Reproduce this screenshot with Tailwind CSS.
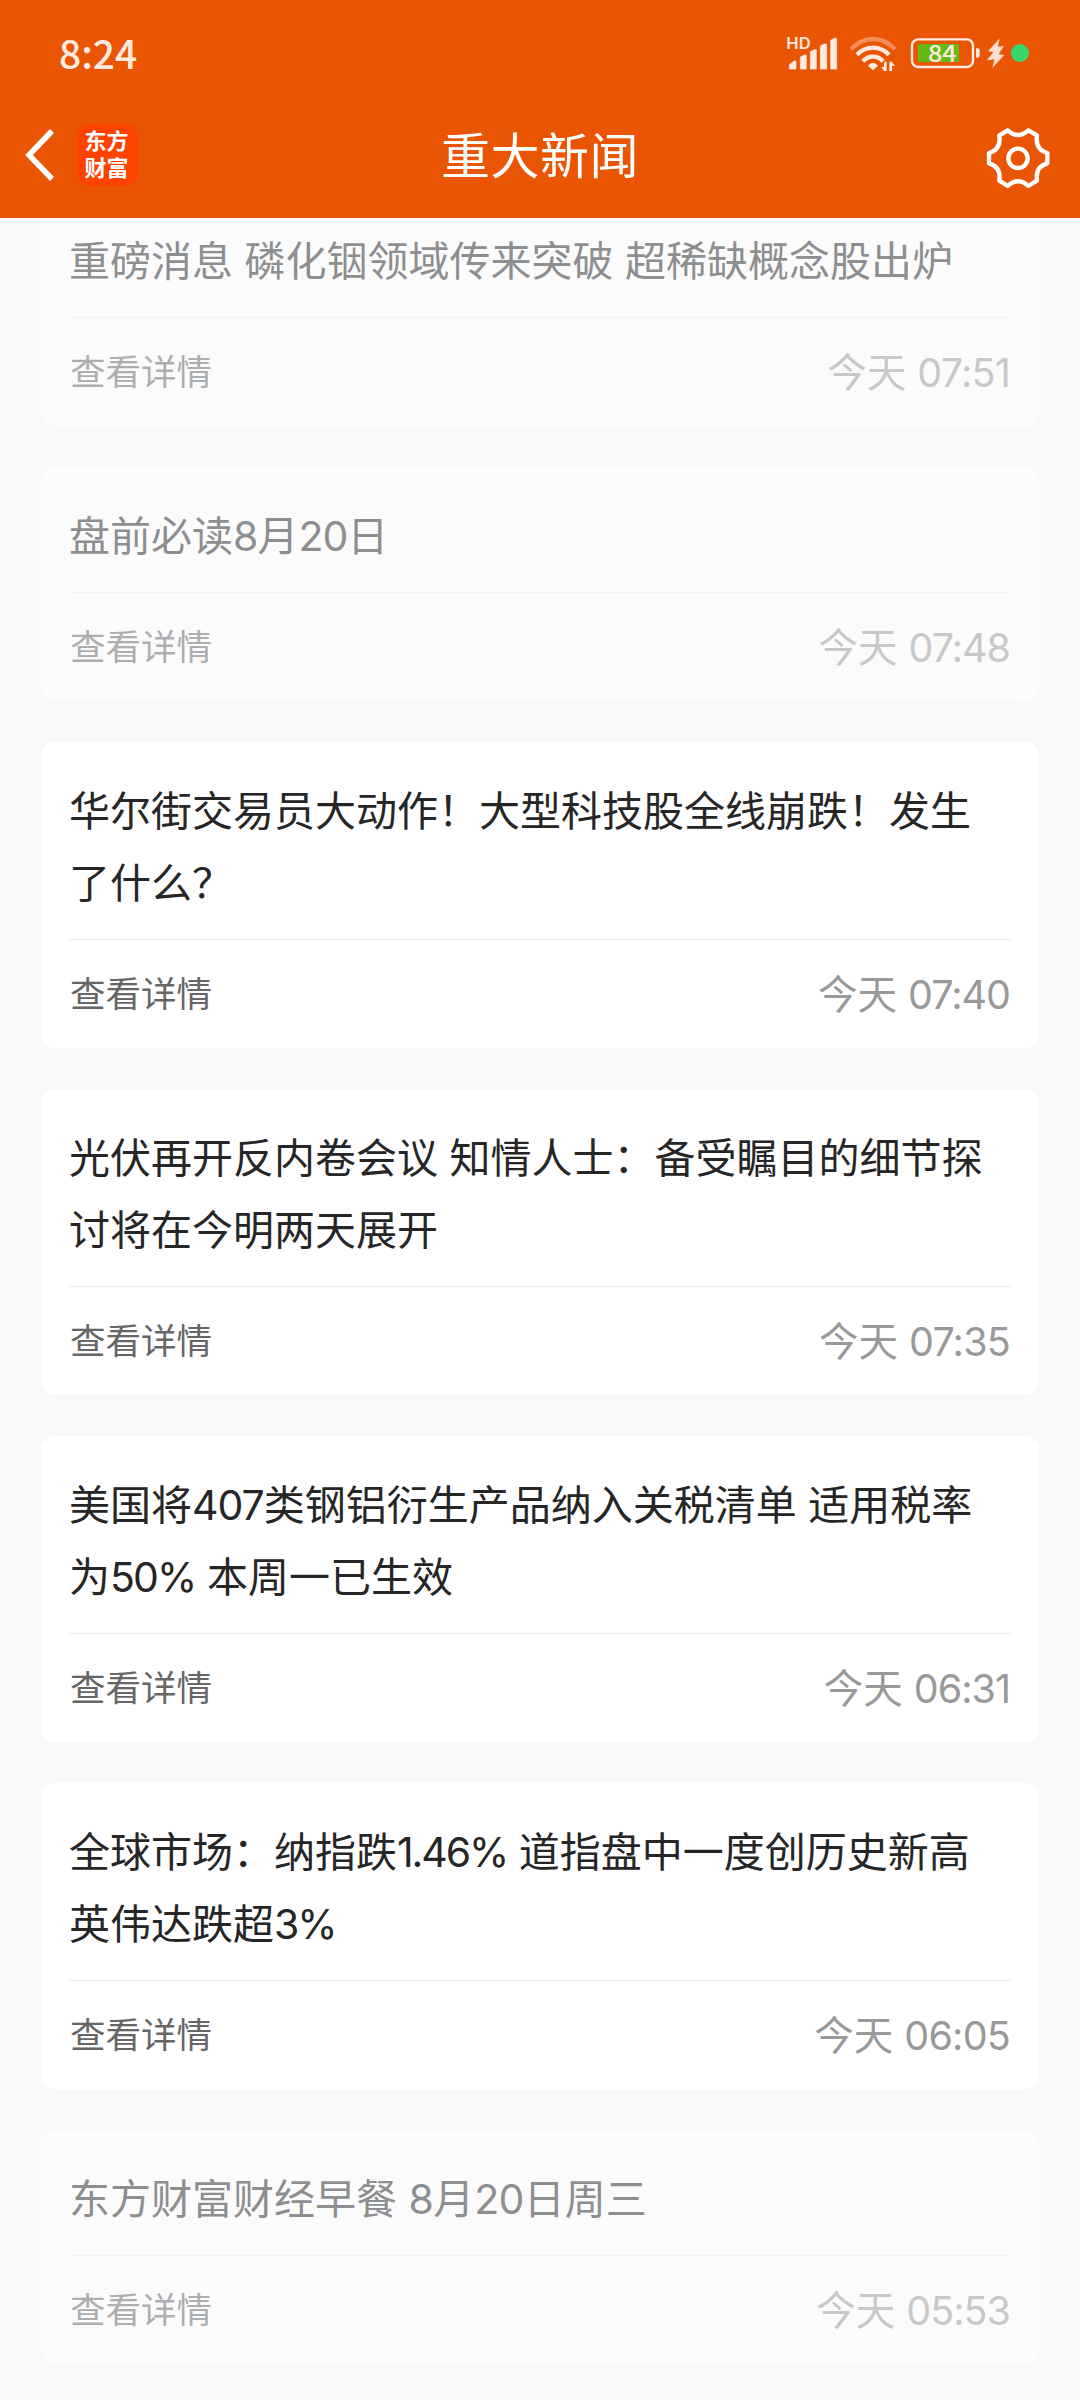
<!DOCTYPE html>
<html lang="zh-CN">
<head>
<meta charset="utf-8">
<title>重大新闻</title>
<script src="https://cdn.jsdelivr.net/npm/@tailwindcss/browser@4"></script>
</head>
<body class="h-[2400px] w-[1080px] overflow-hidden bg-[#f7f8fa] font-['Inter','Noto_Sans_CJK_SC',sans-serif]">
<div class="flex h-[2400px] flex-col overflow-hidden">
  <header class="z-10 flex h-[218px] shrink-0 flex-col bg-[#ea5504] text-white">
    <div class="flex h-[108px] items-center justify-between pl-[59px] pr-[50px]">
      <span class="pb-[3px] font-['Noto_Sans_CJK_SC',sans-serif] text-[39px] font-medium leading-none text-[#ffebdf]">8:24</span>
      <svg class="h-[40px] w-[244px]" viewBox="78 45 732 120" fill="#ffebdf">
        <text x="79" y="90" font-size="47" font-weight="600" textLength="73" lengthAdjust="spacingAndGlyphs">HD</text>
        <path d="M88 150V137L102 126H108V150ZM121 150V114L132 108H139V150ZM151 150V98L162 92H169V150ZM181 150V81L192 75H200V150ZM212 150V64L223 58H230V150Z" stroke="#ffebdf" stroke-width="2" stroke-linejoin="round"/>
        <g fill="none" stroke="#ffebdf" stroke-width="13">
          <path d="M273 91Q302 60 339 60T405 91" stroke-opacity=".38"/>
          <path d="M291 107Q312 86 339 86T387 107"/>
          <path d="M309 127Q321 113 339 113T369 127"/>
        </g>
        <path d="M324 140Q339 123 354 140L339 154Z"/>
        <path d="M380 128V156H373L363 144H372V128ZM388 156V128H395L405 140H396V156Z"/>
        <rect x="456" y="61" width="183" height="83" rx="19" fill="none" stroke="#ffebdf" stroke-width="7"/>
        <path d="M648 88H653Q659 88 659 94V109Q659 116 653 116H648Z"/>
        <rect x="474" y="75" width="123" height="54" rx="4" fill="#66b814"/>
        <text x="504" y="128" font-size="68" font-weight="500" textLength="86" lengthAdjust="spacingAndGlyphs" class="font-['Noto_Sans_CJK_SC',sans-serif]">84</text>
        <path d="M719 58L684 97L700 99L681 124L703 121L697 147L733 108L716 106L732 81L714 83Z" fill="#ffddcf"/>
        <circle cx="780" cy="102" r="27" fill="#38d66b"/>
      </svg>
    </div>
    <div class="grid h-[94px] grid-cols-3 items-center">
      <div class="flex items-center pl-[24px]">
        <svg class="h-[54px] w-[32px]" viewBox="0 0 32 54" fill="none" stroke="#fff" stroke-width="5.5"><path d="M28 3L5 27L28 51"/></svg>
        <div class="ml-[21px] flex h-[62px] w-[61px] flex-col items-center justify-center rounded-[14px] bg-[#ff4200] pb-[5px] pr-[2px] font-['Noto_Sans_CJK_SC',sans-serif] text-[22px] font-bold leading-[27px]"><span>东方</span><span>财富</span></div>
      </div>
      <h1 class="pt-[2px] text-center text-[49px] leading-none tracking-[0.5px]">重大新闻</h1>
      <div class="flex justify-end pr-[30px] pt-[5px]">
        <svg class="h-[64px] w-[64px]" viewBox="678 316 192 192" fill="none" stroke="#fff" stroke-width="13" stroke-linejoin="round">
          <path d="M743 329Q774 357 805 329L831 344Q825 387 862 397V428Q825 438 831 480L805 496Q774 468 743 496L718 480Q724 438 687 428V397Q724 387 718 344Z"/>
          <circle cx="774" cy="413" r="29"/>
        </svg>
      </div>
    </div>
  </header>

  <main class="-mt-[26px] flex flex-col gap-[41px] px-[41px] text-[41px] leading-[72px] text-[#262626]">
    <article class="rounded-[14px] bg-white px-7 pt-[33px] opacity-50">
      <h2 class="h-[92px] whitespace-nowrap">重磅消息 磷化铟领域传来突破 超稀缺概念股出炉</h2>
      <div class="flex h-[109px] items-center justify-between border-t border-[#ebebeb] pl-[1px] pr-[1px] pt-[2px]"><span class="text-[35.5px] text-[#666]">查看详情</span><time class="text-[39.5px] text-[#999]">今天 <span class="tracking-[-0.8px]">07:51</span></time></div>
    </article>
    <article class="rounded-[14px] bg-white px-7 pt-[33px] opacity-50">
      <h2 class="h-[92px] whitespace-nowrap">盘前必读<span class="tracking-[-1px]">8</span>月<span class="tracking-[-1px]">20</span>日</h2>
      <div class="flex h-[109px] items-center justify-between border-t border-[#ebebeb] pl-[1px] pr-[1px] pt-[2px]"><span class="text-[35.5px] text-[#666]">查看详情</span><time class="text-[39.5px] text-[#999]">今天 <span class="tracking-[-1px]">07:48</span></time></div>
    </article>
    <article class="rounded-[14px] bg-white px-7 pt-[33px]">
      <h2 class="h-[164px] whitespace-nowrap">华尔街交易员大动作！大型科技股全线崩跌！发生<br>了什么？</h2>
      <div class="flex h-[109px] items-center justify-between border-t border-[#ebebeb] pl-[1px] pr-[1px] pt-[2px]"><span class="text-[35.5px] text-[#666]">查看详情</span><time class="text-[39.5px] text-[#999]">今天 <span class="tracking-[-1px]">07:40</span></time></div>
    </article>
    <article class="rounded-[14px] bg-white px-7 pt-[33px]">
      <h2 class="h-[164px] whitespace-nowrap">光伏再开反内卷会议 知情人士：备受瞩目的细节探<br>讨将在今明两天展开</h2>
      <div class="flex h-[109px] items-center justify-between border-t border-[#ebebeb] pl-[1px] pr-[1px] pt-[2px]"><span class="text-[35.5px] text-[#666]">查看详情</span><time class="text-[39.5px] text-[#999]">今天 <span class="tracking-[-0.8px]">07:35</span></time></div>
    </article>
    <article class="rounded-[14px] bg-white px-7 pt-[33px]">
      <h2 class="h-[164px] whitespace-nowrap">美国将<span class="tracking-[-1px]">407</span>类钢铝衍生产品纳入关税清单 适用税率<br>为<span class="tracking-[-1.9px]">50%</span> 本周一已生效</h2>
      <div class="flex h-[109px] items-center justify-between border-t border-[#ebebeb] pl-[1px] pr-[1px] pt-[2px]"><span class="text-[35.5px] text-[#666]">查看详情</span><time class="text-[39.5px] text-[#999]">今天 <span class="tracking-[-1px]">06:31</span></time></div>
    </article>
    <article class="rounded-[14px] bg-white px-7 pt-[33px]">
      <h2 class="h-[164px] whitespace-nowrap">全球市场：纳指跌<span class="tracking-[-2.1px]">1.46%</span> 道指盘中一度创历史新高<br>英伟达跌超<span class="tracking-[-2px]">3%</span></h2>
      <div class="flex h-[109px] items-center justify-between border-t border-[#ebebeb] pl-[1px] pr-[1px] pt-[2px]"><span class="text-[35.5px] text-[#666]">查看详情</span><time class="text-[39.5px] text-[#999]">今天 <span class="tracking-[-0.8px]">06:05</span></time></div>
    </article>
    <article class="rounded-[14px] bg-white px-7 pt-[33px] opacity-50">
      <h2 class="h-[92px] whitespace-nowrap">东方财富财经早餐 <span class="tracking-[-0.7px]">8</span>月<span class="tracking-[-0.7px]">20</span>日周三</h2>
      <div class="flex h-[109px] items-center justify-between border-t border-[#ebebeb] pl-[1px] pr-[1px] pt-[2px]"><span class="text-[35.5px] text-[#666]">查看详情</span><time class="text-[39.5px] text-[#999]">今天 <span class="tracking-[-1px]">05:53</span></time></div>
    </article>
  </main>
</div>
</body>
</html>
